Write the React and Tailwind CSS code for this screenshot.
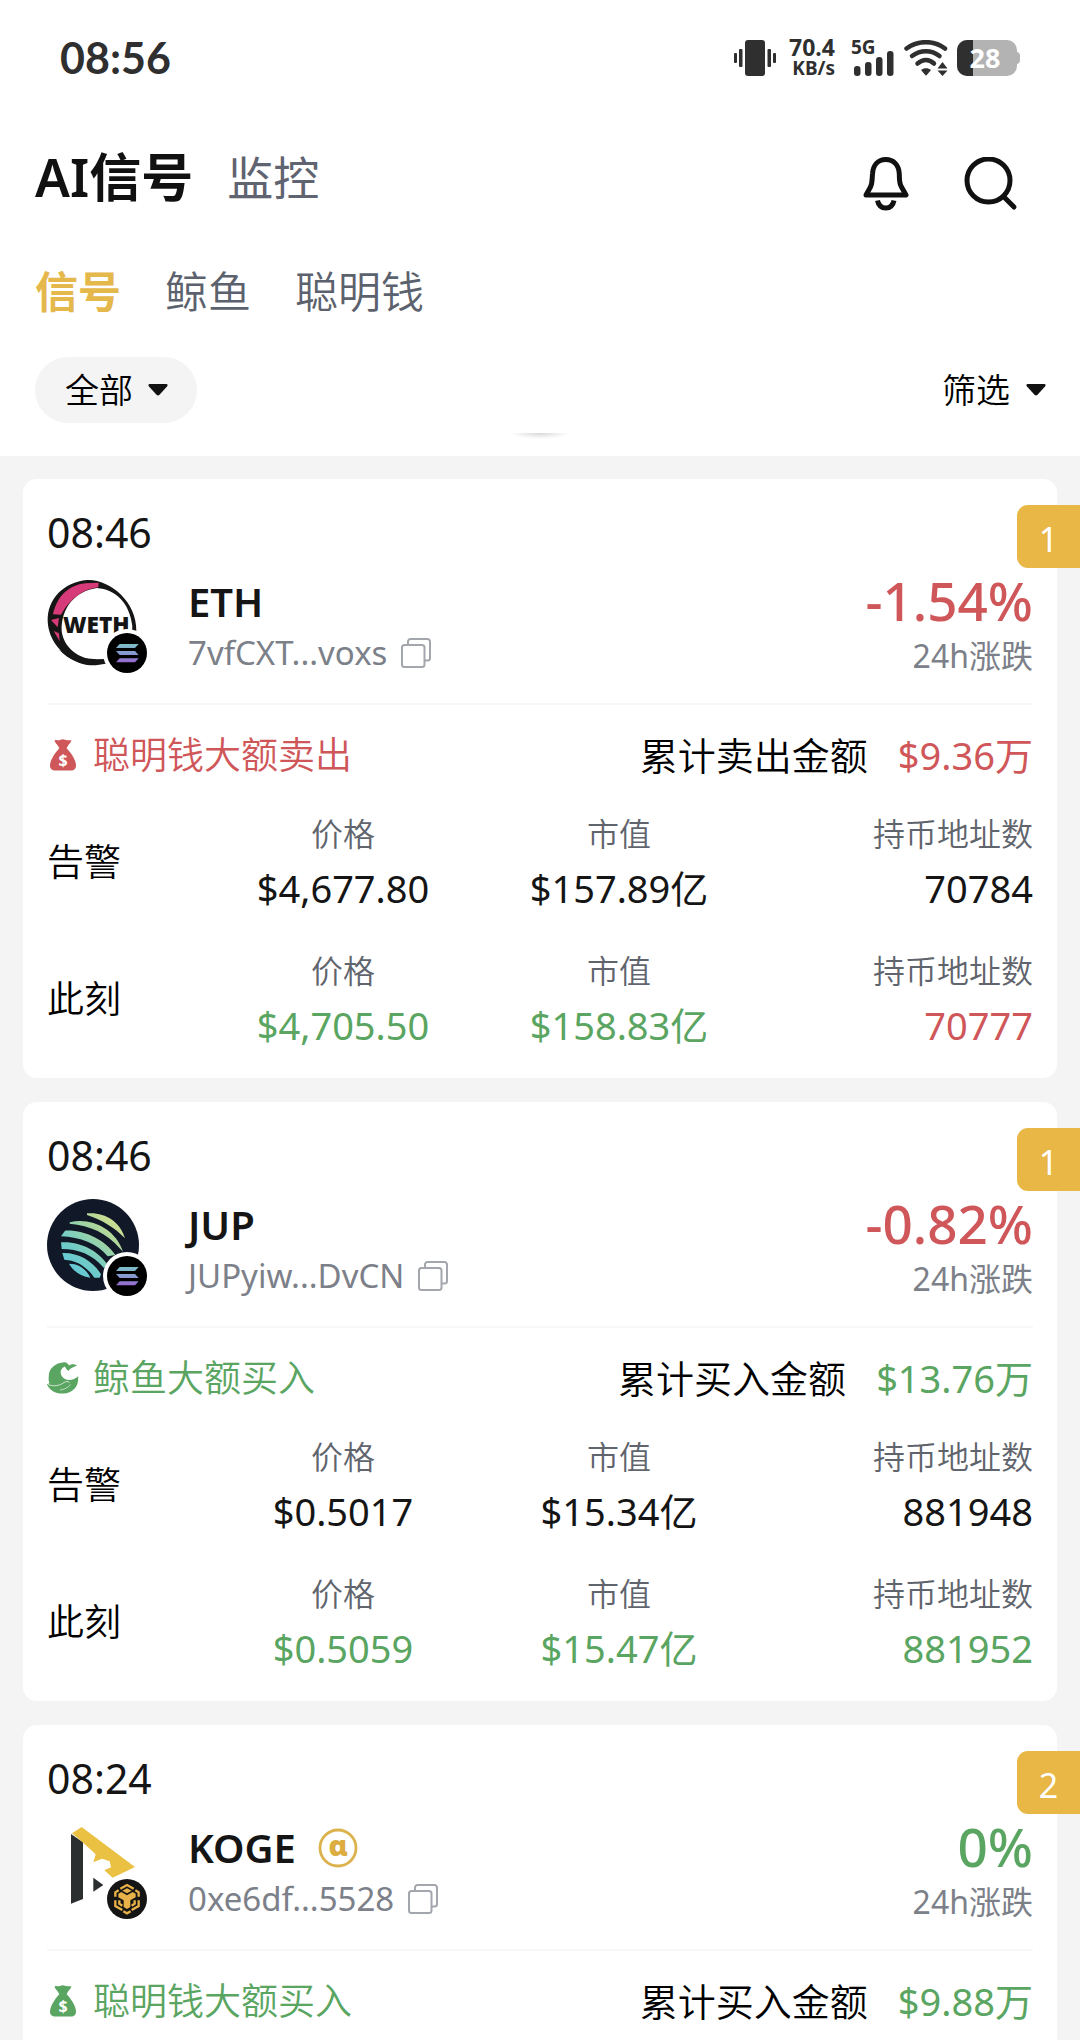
import React from "react";

const signals = [
  {
    time: "08:46",
    badge: 1,
    symbol: "ETH",
    address: "7vfCXT...voxs",
    logo: "weth",
    chain: "solana",
    change: "-1.54%",
    up: false,
    event: { kind: "money", label: "聪明钱大额卖出", up: false },
    total: { label: "累计卖出金额", value: "$9.36万" },
    alert: { price: "$4,677.80", cap: "$157.89亿", holders: "70784" },
    now: { price: "$4,705.50", cap: "$158.83亿", holders: "70777", holdersUp: false },
  },
  {
    time: "08:46",
    badge: 1,
    symbol: "JUP",
    address: "JUPyiw...DvCN",
    logo: "jup",
    chain: "solana",
    change: "-0.82%",
    up: false,
    event: { kind: "whale", label: "鲸鱼大额买入", up: true },
    total: { label: "累计买入金额", value: "$13.76万" },
    alert: { price: "$0.5017", cap: "$15.34亿", holders: "881948" },
    now: { price: "$0.5059", cap: "$15.47亿", holders: "881952", holdersUp: true },
  },
  {
    time: "08:24",
    badge: 2,
    symbol: "KOGE",
    alpha: true,
    address: "0xe6df...5528",
    logo: "koge",
    chain: "bnb",
    change: "0%",
    up: true,
    event: { kind: "money", label: "聪明钱大额买入", up: true },
    total: { label: "累计买入金额", value: "$9.88万" },
  },
];

const tone = (up) => (up ? "text-[#5aa561]" : "text-[#cf5659]");

/* ---------- status bar ---------- */

function StatusBar() {
  return (
    <div className="flex h-[116px] items-center justify-between px-[60px] text-[#2f2f2f]">
      <span className="font-['Lato','Noto_Sans',sans-serif] text-[43px] font-bold leading-[48px]">08:56</span>
      <div className="flex items-center">
        <svg width="42" height="36" viewBox="0 0 42 36" fill="currentColor" aria-hidden="true">
          <rect x="11" width="20" height="36" rx="3" />
          <rect x="5" y="9" width="3.5" height="18" rx="1" />
          <rect x="0" y="13" width="3" height="10" rx="1" />
          <rect x="33.5" y="9" width="3.5" height="18" rx="1" />
          <rect x="39" y="13" width="3" height="10" rx="1" />
        </svg>
        <div className="ml-[13px] flex flex-col items-end font-bold">
          <span className="text-[23px] leading-[21px]">70.4</span>
          <span className="text-[19px] leading-[21px]">KB/s</span>
        </div>
        <svg className="ml-4 overflow-visible" width="44" height="36" viewBox="0 0 44 36" fill="currentColor" aria-label="5G">
          <text x="0" y="14" fontSize="19" fontWeight="700">5G</text>
          <rect x="3" y="26" width="6.5" height="10" rx="3" />
          <rect x="14" y="22" width="6.5" height="14" rx="3" />
          <rect x="25" y="17" width="6.5" height="19" rx="3" />
          <rect x="36" y="11" width="6.5" height="25" rx="3" />
        </svg>
        <svg className="ml-[9px]" width="44" height="36" viewBox="0 0 44 36" fill="none" stroke="currentColor" strokeWidth="4.5" strokeLinecap="round" aria-hidden="true">
          <path d="M2.500 8.500C14 0 30 0 41 8.500" />
          <path d="M8 16C16.500 9.500 27.500 9.500 35.500 16" />
          <path d="M13.500 23.500C19 19 25 19 30 23.500" />
          <path d="M17 30C20 27.500 24 27.500 27 30L23 34.800Q22 36 21 34.800Z" fill="currentColor" stroke="none" />
          <path d="M38.500 22L43.500 28.500H33.500ZM33.500 30.500H43.500L38.500 36Z" fill="currentColor" stroke="none" />
        </svg>
        <svg className="ml-[9px]" width="63" height="36" viewBox="0 0 63 36" aria-label="28%">
          <path d="M10 0H50A10 10 0 0 1 60 10V26A10 10 0 0 1 50 36H10A10 10 0 0 1 0 26V10A10 10 0 0 1 10 0Z" fill="#b3b3b3" />
          <path d="M10 0H16V36H10A10 10 0 0 1 0 26V10A10 10 0 0 1 10 0Z" fill="#2f2f2f" />
          <path d="M60 12A4 4 0 0 1 63 16V20A4 4 0 0 1 60 24Z" fill="#b3b3b3" />
          <text x="28" y="28" textAnchor="middle" fontSize="27" fontWeight="700" fill="#fff">28</text>
        </svg>
      </div>
    </div>
  );
}

/* ---------- icons ---------- */

function BellIcon() {
  return (
    <svg width="46" height="54" viewBox="0 0 46 54" fill="none" stroke="currentColor" strokeWidth="5" strokeLinejoin="round" aria-hidden="true">
      <path d="M3 38L7.500 30C9.500 26 9 22 9.500 17C10 8 15 2.500 22.800 2.500C30.500 2.500 36 8 36.300 17C36.500 22 36 26 38.500 30L43 38Z" />
      <path d="M14.500 43.500C15.500 48.500 18.500 51 22.800 51C27 51 30 48.500 31 43.500" />
    </svg>
  );
}

function SearchIcon() {
  return (
    <svg width="54" height="54" viewBox="0 0 54 54" fill="none" stroke="currentColor" strokeWidth="5" strokeLinecap="round" aria-hidden="true">
      <circle cx="24.5" cy="23.5" r="21.5" />
      <path d="M40 40L50 50" />
    </svg>
  );
}

function Caret() {
  return (
    <svg width="20" height="12" viewBox="0 0 20 12" fill="currentColor" aria-hidden="true">
      <path d="M1.500 0H18.500Q20.500 .5 19 2.500L11.500 10.800Q10 12 8.500 10.800L1 2.500Q-.5 .5 1.500 0Z" />
    </svg>
  );
}

function CopyIcon() {
  return (
    <svg width="30" height="30" viewBox="0 0 30 30" fill="none" stroke="#a3a6ac" strokeWidth="2" aria-hidden="true">
      <rect x="1" y="7" width="22.5" height="22" rx="2.5" />
      <path d="M7 7V3.500A2.500 2.500 0 0 1 9.500 1H26.500A2.500 2.500 0 0 1 29 3.500V20A2.500 2.500 0 0 1 26.500 22.500H23.500" />
    </svg>
  );
}

function MoneyIcon() {
  return (
    <svg width="32" height="32" viewBox="0 0 32 32" fill="currentColor" aria-hidden="true">
      <path d="M7.500 1.500C10 0 11 2 13 1C15 0 16 0 18 .8C20 1.600 21.500 .8 24.500 1.500C23 5 20.500 6 19.500 10H12.500C11.500 6 8.500 5 7.500 1.500Z" />
      <path d="M12 9.500H20C24 14 29 21 29 26.500C29 30 27 31.500 24 31.500H8.500C5 31.500 3 30 3 26.500C3 21 8 14 12 9.500Z" />
      <text x="16" y="27" textAnchor="middle" fontSize="16" fontWeight="700" fill="#fff">$</text>
    </svg>
  );
}

function WhaleIcon() {
  return (
    <svg width="32" height="32" viewBox="0 0 32 32" fill="currentColor" aria-hidden="true">
      <path d="M17.500 .3C8 .8 1.500 7 1.800 14C1.500 17 1.500 19 2.500 21.200L0 22.300C2.500 28.500 8.500 31.800 16 31.600C25.500 31.200 32 25 31.200 14.200C27 18.500 19 19.500 15.500 15C12.300 11 13.500 6 18 4.500C18.500 6.500 20 7.500 21.500 9C22.500 6.500 26 5 30 3.500C27 1.500 24 2.500 22 3.500C21 1.800 19.500 .2 17.500 .3Z" />
      <path d="M1 22.500C7 25 13 23.500 17 20.500C19 19.200 21 19.200 22.500 20.500" fill="none" stroke="#fff" strokeWidth=".7" />
      <path d="M13 28C17 27.500 21 26 23.500 22.500" fill="none" stroke="#fff" strokeWidth=".6" />
    </svg>
  );
}

function AlphaIcon() {
  return (
    <svg className="overflow-visible" width="40" height="40" viewBox="0 0 40 40" aria-label="Alpha">
      <circle cx="20" cy="20" r="18" fill="none" stroke="#dcb24c" strokeWidth="2.8" />
      <text x="20" y="28" textAnchor="middle" fontSize="29" fontWeight="900" fill="#dcae42">ɑ</text>
    </svg>
  );
}

/* ---------- token and chain logos ---------- */

function WethLogo() {
  return (
    <svg width="92" height="92" viewBox="0 0 276 276" aria-hidden="true">
      <path d="M120 12C185 8 270 75 268 165C268 220 220 268 130 268C80 265 5 215 2 135C0 70 50 18 120 12ZM150 36C85 45 42 95 44 165C50 215 95 250 150 252C215 248 256 205 256 150C248 80 205 40 150 36Z" fill="#151515" fillRule="evenodd" />
      <path d="M18 115C30 60 66 27 115 22L155 20L154 34C110 40 74 62 42 116Z" fill="#d63a78" />
      <path d="M12 132L36 126L32 154Z" fill="#d63a78" />
      <path d="M20 165L36 172L38 196Z" fill="#d63a78" />
      <path d="M35 220C70 245 110 250 175 250L172 262C120 272 75 262 35 220Z" fill="#151515" />
      <text x="148" y="170" textAnchor="middle" fontFamily="Open Sans" fontSize="68" fontWeight="800" fill="#151515">WETH</text>
    </svg>
  );
}

function JupLogo() {
  return (
    <svg width="92" height="92" viewBox="0 0 276 276" aria-hidden="true">
      <defs>
        <linearGradient id="jupStripe" x1="60" y1="230" x2="220" y2="50" gradientUnits="userSpaceOnUse">
          <stop offset="0" stopColor="#5cc5dc" />
          <stop offset=".35" stopColor="#74cdc4" />
          <stop offset=".65" stopColor="#a5d4a0" />
          <stop offset="1" stopColor="#dfe28a" />
        </linearGradient>
      </defs>
      <circle cx="138" cy="138" r="138" fill="#111827" />
      <g fill="url(#jupStripe)">
        <path d="M120 43C170 38 220 66 234 118C205 88 165 62 120 48Z" />
        <path d="M68 70C130 54 205 88 228 158L218 148C180 102 130 80 68 74Z" />
        <path d="M42 112L54 95C110 92 175 122 205 168L182 172C150 134 100 114 42 112Z" />
        <path d="M42 130C100 126 155 156 182 198L170 206C135 166 95 150 44 150Z" />
        <path d="M46 162C95 160 140 188 162 226L158 236H142C120 204 90 184 52 182Z" />
        <path d="M66 194C98 194 118 212 130 236C100 232 78 216 66 194Z" />
      </g>
    </svg>
  );
}

function KogeLogo() {
  return (
    <svg width="92" height="92" viewBox="0 0 276 276" aria-hidden="true">
      <path d="M72 36L108 61V231L72 245Z" fill="#2c2f30" />
      <path d="M75 34L104 15L264 135L197 167L172 145L192 136L188 118L165 110L139 121L146 97L106 60Z" fill="#eac143" />
      <path d="M139 167L169 189L139 209Z" fill="#2c2f30" />
    </svg>
  );
}

function SolanaBadge() {
  return (
    <svg width="48" height="48" viewBox="-12 -12 144 144" aria-hidden="true">
      <defs>
        <linearGradient id="solBars" x1="60" y1="30" x2="60" y2="92" gradientUnits="userSpaceOnUse">
          <stop offset="0" stopColor="#7cc4c4" />
          <stop offset=".5" stopColor="#8599cf" />
          <stop offset="1" stopColor="#9a62cf" />
        </linearGradient>
      </defs>
      <circle cx="60" cy="60" r="72" fill="#fff" />
      <circle cx="60" cy="60" r="60" fill="#000" />
      <path d="M38 33H95L84 45H27ZM27 54H84L95 66H38ZM38 76H95L84 88H27Z" fill="url(#solBars)" />
    </svg>
  );
}

function BnbBadge() {
  return (
    <svg width="48" height="48" viewBox="-12 -12 144 144" aria-hidden="true">
      <circle cx="60" cy="60" r="72" fill="#fff" />
      <circle cx="60" cy="60" r="60" fill="#151515" />
      <g fill="none" stroke="#e9b248" strokeWidth="7">
        <path d="M40 29L60 18L80 29" />
        <path d="M25 53V40L35 34M95 53V40L85 34" />
        <path d="M25 64V81L46 93M95 64V81L74 93" />
        <path d="M37 64V74L46 80M83 64V74L74 80" />
        <path d="M49 97L60 103L71 97" />
      </g>
      <path d="M46 35L60 28L74 35L60 43Z" fill="#e9b248" />
      <path d="M34 44L43 39L60 49L77 39L86 44V55L70 64V84L60 90L50 84V64L34 55Z" fill="#e9b248" />
    </svg>
  );
}

const logos = { weth: WethLogo, jup: JupLogo, koge: KogeLogo };
const chains = { solana: SolanaBadge, bnb: BnbBadge };

/* ---------- page parts ---------- */

function Dropdown({ label, pill }) {
  return (
    <div className="relative flex items-center">
      <select
        aria-label={label}
        className={
          pill
            ? "h-[66px] appearance-none rounded-full bg-[#f4f4f4] pl-[30px] pr-[64px] text-[34px] font-[350] leading-[48px] text-black"
            : "h-[66px] appearance-none bg-transparent pr-[36px] text-[34px] font-[350] leading-[48px] text-black"
        }
      >
        <option>{label}</option>
      </select>
      <span className={pill ? "pointer-events-none absolute right-[29px]" : "pointer-events-none absolute right-0"}>
        <Caret />
      </span>
    </div>
  );
}

function Header() {
  return (
    <header className="bg-white pb-[33px] text-[#111]">
      <StatusBar />
      <div className="mt-[31px] flex h-16 items-end justify-between pl-[35px] pr-[62px]">
        <nav className="flex gap-[34px] self-start leading-[60px]">
          <button className="text-[52px] font-semibold">AI信号</button>
          <button className="text-[46px] text-[#606370]">监控</button>
        </nav>
        <div className="flex gap-[55px]">
          <button aria-label="通知"><BellIcon /></button>
          <button aria-label="搜索"><SearchIcon /></button>
        </div>
      </div>
      <nav className="mt-[51px] flex gap-[44px] pl-[35px] text-[43px] leading-[60px] text-[#5c626d]">
        <button className="font-semibold text-[#e5b84b]">信号</button>
        <button className="font-[350]">鲸鱼</button>
        <button className="font-[350]">聪明钱</button>
      </nav>
      <div className="relative mt-[35px] flex items-center justify-between pl-[35px] pr-[34px]">
        <Dropdown label="全部" pill />
        <Dropdown label="筛选" />
        <span className="absolute -bottom-4 left-1/2 h-[6px] w-[60px] -translate-x-1/2 bg-[radial-gradient(ellipse_at_top,#d8d8d8,#ffffff_70%)]" />
      </div>
    </header>
  );
}

function Metric({ label, value, className, align }) {
  return (
    <div className={align === "right" ? "text-right" : "text-center"}>
      <dt className="text-[32px] font-[350] leading-[44px] text-[#5f646d]">{label}</dt>
      <dd className={`mt-2 text-[38px] leading-[48px] ${className}`}>{value}</dd>
    </div>
  );
}

function MetricRow({ title, data, priceTone, holdersTone }) {
  return (
    <div className="grid grid-cols-[158px_1fr_1fr_1fr] items-center">
      <h3 className="text-[37px] font-[350] leading-[50px] text-black">{title}</h3>
      <dl className="contents">
        <Metric label="价格" value={data.price} className={priceTone} />
        <Metric label="市值" value={data.cap} className={priceTone} />
        <Metric label="持币地址数" value={data.holders} className={holdersTone} align="right" />
      </dl>
    </div>
  );
}

function SignalCard({ item }) {
  const Logo = logos[item.logo];
  const Chain = chains[item.chain];
  return (
    <article className="relative rounded-[14px] bg-white px-6 pb-[29px] pt-[29px] text-[#151515]">
      <span className="absolute -right-[23px] top-[26px] flex h-[63px] w-[63px] items-center justify-center rounded-l-[11px] bg-[#e8b746] pt-1 text-[34px] leading-[48px] text-white">
        {item.badge}
      </span>
      <time className="block text-[41px] leading-[48px]">{item.time}</time>

      <div className="mt-5 flex items-start">
        <div className="relative h-[92px] w-[92px] shrink-0">
          <Logo />
          <span className="absolute -bottom-[9px] -right-3"><Chain /></span>
        </div>
        <div className="ml-[49px] flex-1 leading-[51px]">
          <h2 className="flex items-center gap-[22px] text-[40px] font-semibold">
            {item.symbol}
            {item.alpha && <AlphaIcon />}
          </h2>
          <div className="flex items-center gap-[14px] text-[33px] text-[#7c8089]">
            {item.address}
            <button aria-label="复制地址"><CopyIcon /></button>
          </div>
        </div>
        <div className="text-right">
          <p className={`text-[53px] font-medium leading-[50px] ${tone(item.up)}`}>{item.change}</p>
          <p className="text-[32px] leading-[60px] text-[#7c8089]">24h涨跌</p>
        </div>
      </div>

      <div className="mt-[17px] flex items-center justify-between border-t-2 border-[#f8f8f8] pt-[26px] text-[38px] font-[350] leading-[48px] text-black">
        <div className={`flex items-center gap-[14px] text-[37px] ${tone(item.event.up)}`}>
          {item.event.kind === "money" ? <MoneyIcon /> : <WhaleIcon />}
          {item.event.label}
        </div>
        <div className="flex gap-[30px]">
          {item.total.label}
          <span className={`font-normal ${tone(item.event.up)}`}>{item.total.value}</span>
        </div>
      </div>

      {item.alert && (
        <div className="mt-[33px] flex flex-col gap-[37px]">
          <MetricRow title="告警" data={item.alert} priceTone="text-[#151515]" holdersTone="text-[#151515]" />
          <MetricRow title="此刻" data={item.now} priceTone={tone(true)} holdersTone={tone(item.now.holdersUp)} />
        </div>
      )}
    </article>
  );
}

export default function App() {
  return (
    <div className="h-screen overflow-hidden bg-[#f4f4f4] font-['Noto_Sans','Noto_Sans_CJK_SC',sans-serif]" lang="zh-CN">
      <Header />
      <main className="flex flex-col gap-6 px-[23px] pt-[23px]">
        {signals.map((item, i) => (
          <SignalCard key={i} item={item} />
        ))}
      </main>
    </div>
  );
}
